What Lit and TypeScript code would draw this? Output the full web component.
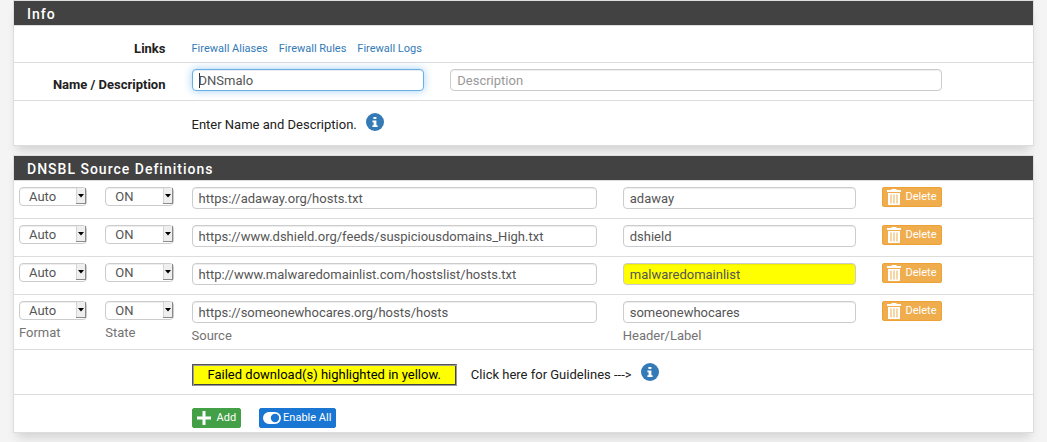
import { LitElement, html, css, svg } from "lit";
import { customElement, state, query } from "lit/decorators.js";
import { classMap } from "lit/directives/class-map.js";

interface Source {
  url: string;
  header: string;
  failed?: boolean;
}

const infoIcon = html`<svg viewBox="0 0 18 18" width="18" height="18" aria-hidden="true">
  <circle cx="9" cy="9" r="9" fill="#337ab7" />
  <path fill="#fff" d="M7.4 4h3v2h-3zM6.4 7.4h4v4.8h1.2V14H6.4v-1.8h1.2V9.2H6.4z" />
</svg>`;

const trashIcon = html`<svg viewBox="0 0 14 16" width="14" height="16" aria-hidden="true">
  <path fill="#fff" fill-rule="evenodd"
    d="M0 1h4.5V0h5v1H14v2H0zM1 4h12v11.2a.8.8 0 0 1-.8.8H1.8a.8.8 0 0 1-.8-.8zM3.5 5.5v9h1v-9zM6.5 5.5v9h1v-9zM9.5 5.5v9h1v-9z" />
</svg>`;

const plusIcon = html`<svg viewBox="0 0 14 14" width="14" height="14" aria-hidden="true">
  <path fill="#fff" d="M5.5 0h3v5.5H14v3H8.5V14h-3V8.5H0v-3h5.5z" />
</svg>`;

const toggleIcon = html`<svg viewBox="0 0 18 12" width="18" height="12" aria-hidden="true">
  <path fill="#fff" fill-rule="evenodd"
    d="M6 0h6a6 6 0 0 1 0 12H6A6 6 0 0 1 6 0zM12 1.8a4.2 4.2 0 1 0 0 8.4a4.2 4.2 0 0 0 0-8.4z" />
</svg>`;

const arrow = svg`<path fill="#efefef" d="M0 0h10v16H0z" />
  <path fill="#8a8a8a" d="M9 0h1v16H0v-1h9z" />
  <path fill="#d5d5d5" d="M0 0h1v15H0z" />
  <path fill="#000" d="M2 6h6L5 9.5z" />`;

@customElement("app-root")
export class AppRoot extends LitElement {
  static styles = css`
    :host {
      display: block;
      box-sizing: border-box;
      min-height: 100vh;
      padding: 0 13px;
      background: #f4f4f4;
      color: #212121;
      font: 13px/18px Roboto, sans-serif;
    }
    * {
      box-sizing: border-box;
    }
    .panel {
      margin-bottom: 9px;
      border: 1px solid #ddd;
      background: #fff;
      box-shadow: 0 8px 10px -4px rgba(0, 0, 0, 0.15);
    }
    .heading {
      margin: 0;
      padding: 4px 13px 2px;
      background: #424242;
      color: #fff;
      font-size: 14px;
      line-height: 18px;
      font-weight: 500;
      letter-spacing: 1px;
    }
    .row {
      display: grid;
      grid-template-columns: repeat(12, minmax(0, 1fr));
      column-gap: 26px;
      align-items: start;
      padding: 6px 5px 9px;
      border-top: 1px solid #ddd;
    }
    .entry:has(.help) {
      padding-bottom: 4px;
    }
    .links {
      padding-top: 14px;
      padding-bottom: 4px;
    }
    .names {
      padding-bottom: 6px;
    }
    .note {
      padding-top: 12px;
      padding-bottom: 9px;
    }
    .guide {
      padding-top: 13px;
      padding-bottom: 8px;
    }
    .actions {
      padding-top: 13px;
      padding-bottom: 4px;
    }
    .caption {
      grid-column: 1 / 3;
      padding-top: 0;
      text-align: right;
      font-weight: 700;
    }
    .names .caption {
      padding-top: 7px;
    }
    .wide {
      grid-column: 3 / 13;
      display: flex;
      align-items: center;
    }
    .link-list {
      gap: 11px;
      font-size: 11px;
    }
    a {
      color: #337ab7;
      text-decoration: none;
    }
    .name {
      grid-column: 3 / 6;
    }
    .description {
      grid-column: 6 / 12;
    }
    .source {
      grid-column: 3 / 8;
    }
    .header {
      grid-column: 8 / 11;
    }
    .control {
      display: block;
      width: 100%;
      height: 22px;
      padding: 0 6px;
      border: 1px solid #ccc;
      border-radius: 4px;
      outline: 0;
      background: #fff;
      box-shadow: inset 0 1px 1px rgba(0, 0, 0, 0.075);
      color: #555;
      font: inherit;
    }
    .control::placeholder {
      color: #999;
      opacity: 1;
    }
    .control:focus {
      border-color: #66afe9;
      box-shadow: inset 0 1px 1px rgba(0, 0, 0, 0.075), 0 0 8px rgba(102, 175, 233, 0.6);
    }
    .at-start:focus {
      caret-color: transparent;
      background: linear-gradient(#333, #333) 6px 3px / 1px 15px no-repeat #fff;
    }
    .failed {
      background: #ff0;
    }
    .picker {
      display: grid;
      margin-right: -8px;
    }
    .picker select,
    .picker svg {
      grid-area: 1 / 1;
    }
    .picker svg {
      justify-self: end;
      margin: 1px;
      pointer-events: none;
    }
    .select {
      appearance: none;
      width: 100%;
      height: 19px;
      padding: 0 9px;
      border: 1px solid #ccc;
      border-radius: 4px;
      background: #fff;
      box-shadow: inset 0 1px 1px rgba(0, 0, 0, 0.075);
      color: #555;
      font: inherit;
      line-height: 16px;
    }
    .help {
      display: block;
      padding-top: 4px;
      color: #737373;
    }
    .btn {
      display: inline-flex;
      align-items: center;
      height: 20px;
      padding: 0 4px;
      border: 1px solid;
      border-radius: 2px;
      color: #fff;
      font: 11px/18px Roboto, sans-serif;
      white-space: nowrap;
    }
    .delete {
      grid-column: 11 / 13;
      justify-self: start;
      gap: 5px;
      border-color: #eea236;
      background: #f0ad4e;
    }
    .add {
      gap: 6px;
      border-color: #43a047;
      background: #43a047;
    }
    .enable {
      gap: 2px;
      margin-left: 18px;
      padding: 0 4px 0 3px;
      border-color: #1976d2;
      background: #1976d2;
    }
    .info {
      display: block;
      width: 18px;
      height: 18px;
      margin: 0 0 5px 9px;
      padding: 0;
      border: 0;
      background: none;
    }
    .info svg {
      display: block;
    }
    .warning {
      margin-right: 14px;
      padding: 1px 15px;
      border: 1px solid;
      border-color: #555 #999 #999 #555;
      box-shadow: inset 1px 1px #999, inset -1px -1px #444;
      background: #ff0;
      color: #000;
    }
  `;

  @state() private sources: Source[] = [
    { url: "https://adaway.org/hosts.txt", header: "adaway" },
    { url: "https://www.dshield.org/feeds/suspiciousdomains_High.txt", header: "dshield" },
    { url: "http://www.malwaredomainlist.com/hostslist/hosts.txt", header: "malwaredomainlist", failed: true },
    { url: "https://someonewhocares.org/hosts/hosts", header: "someonewhocares" },
  ];

  @state() private caretAtStart = true;

  @query("#name") private nameInput!: HTMLInputElement;

  firstUpdated() {
    this.nameInput.focus();
    this.nameInput.setSelectionRange(0, 0);
  }

  private trackCaret() {
    this.caretAtStart = this.nameInput.selectionEnd === 0;
  }

  private remove(index: number) {
    this.sources = this.sources.filter((_, i) => i !== index);
  }

  private add() {
    this.sources = [...this.sources, { url: "", header: "" }];
  }

  private picker(id: string, label: string, options: string[]) {
    return html`<div class="picker">
      <select class="select" id=${id} aria-label=${label}>
        ${options.map((o) => html`<option>${o}</option>`)}
      </select>
      <svg viewBox="0 0 10 17" width="10" height="17" aria-hidden="true">${arrow}</svg>
    </div>`;
  }

  private sourceRow(s: Source, i: number) {
    const last = i === this.sources.length - 1;
    const help = (id: string, text: string) =>
      last ? html`<label class="help" for=${id + i}>${text}</label>` : "";
    return html`<div class="row entry">
      <div>${this.picker("format" + i, "Format", ["Auto", "Flex"])}${help("format", "Format")}</div>
      <div>${this.picker("state" + i, "State", ["ON", "OFF"])}${help("state", "State")}</div>
      <div class="source">
        <input class="control" id=${"source" + i} aria-label="Source" .value=${s.url} />
        ${help("source", "Source")}
      </div>
      <div class="header">
        <input
          class=${classMap({ control: true, failed: !!s.failed })}
          id=${"header" + i}
          aria-label="Header/Label"
          .value=${s.header}
        />
        ${help("header", "Header/Label")}
      </div>
      <button class="btn delete" @click=${() => this.remove(i)}>${trashIcon}Delete</button>
    </div>`;
  }

  render() {
    return html`
      <section class="panel">
        <h2 class="heading">Info</h2>
        <div class="row links">
          <div class="caption">Links</div>
          <nav class="wide link-list">
            <a href="#aliases">Firewall Aliases</a>
            <a href="#rules">Firewall Rules</a>
            <a href="#logs">Firewall Logs</a>
          </nav>
        </div>
        <div class="row names">
          <label class="caption" for="name">Name / Description</label>
          <div class="name">
            <input
              class=${classMap({ control: true, "at-start": this.caretAtStart })}
              id="name"
              value="DNSmalo"
              @keyup=${this.trackCaret}
              @input=${this.trackCaret}
              @click=${this.trackCaret}
            />
          </div>
          <div class="description">
            <input class="control" placeholder="Description" aria-label="Description" />
          </div>
        </div>
        <div class="row note">
          <div class="wide">
            <span>Enter Name and Description.</span>
            <button class="info" aria-label="More information">${infoIcon}</button>
          </div>
        </div>
      </section>
      <section class="panel">
        <h2 class="heading">DNSBL Source Definitions</h2>
        ${this.sources.map((s, i) => this.sourceRow(s, i))}
        <div class="row guide">
          <div class="wide">
            <span class="warning">Failed download(s) highlighted in yellow.</span>
            <span>Click here for Guidelines ---&gt;</span>
            <button class="info" aria-label="Guidelines">${infoIcon}</button>
          </div>
        </div>
        <div class="row actions">
          <div class="wide">
            <button class="btn add" @click=${this.add}>${plusIcon}Add</button>
            <button class="btn enable">${toggleIcon}Enable All</button>
          </div>
        </div>
      </section>
    `;
  }
}
